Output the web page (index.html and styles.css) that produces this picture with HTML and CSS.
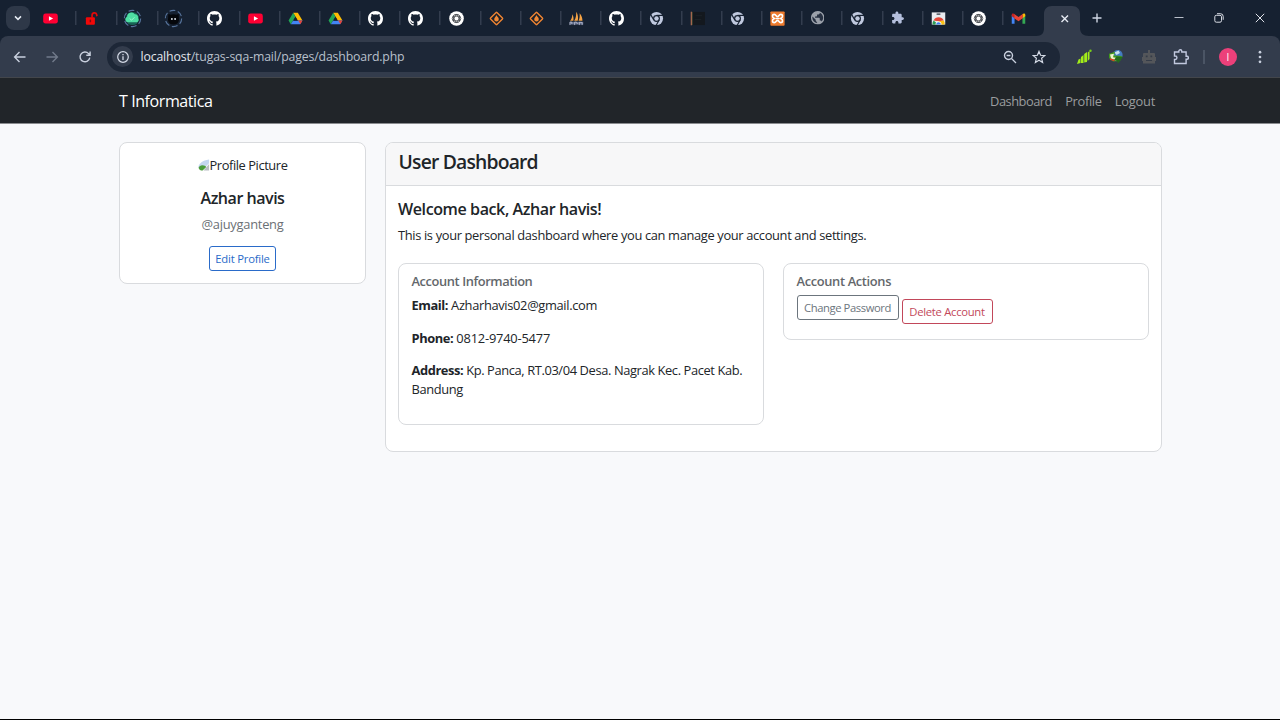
FILE: index.html
```
<!DOCTYPE html>
<html lang="en">
<head>
<meta charset="utf-8">
<title>User Dashboard</title>
<link rel="stylesheet" href="styles.css">
</head>
<body>
<svg class="sprite" aria-hidden="true">
  <symbol id="youtube" viewBox="0 0 16 16"><rect x=".2" y="2.6" width="15.6" height="10.8" rx="2.6" fill="#ff0033"/><path d="M6.3 5.5v5L10.8 8z" fill="#fff"/></symbol>
  <symbol id="unlock" viewBox="0 0 16 16"><rect x="2" y="6.600" width="9.600" height="8" rx="1" fill="#f20808"/><path d="M8.600 7.500V4.400a2.500 2.500 0 0 1 4.900-.6l.3 1.800" fill="none" stroke="#e00a0a" stroke-width="1.800"/><path d="M6.800 9.200v2.800" stroke="#7c0a12" stroke-width="1.500"/></symbol>
  <symbol id="cloud" viewBox="0 0 20 20"><circle cx="10" cy="10" r="8.6" fill="none" stroke="#56739b" stroke-width="1.2" stroke-dasharray="6.2 2.8"/><circle cx="10" cy="10" r="6.9" fill="#176354"/><path d="M5 14a3 3 0 0 1-.7-5.8A4.6 4.6 0 0 1 12.500 5.500a3.200 3.200 0 0 1 3.300 4.200A2.700 2.700 0 0 1 14.800 14z" fill="#4fdfa4"/><path d="M7 10l2 1.800 3-3" fill="none" stroke="#b6ffdf" stroke-width=".8"/></symbol>
  <symbol id="mask" viewBox="0 0 20 20"><circle cx="10" cy="10" r="8.600" fill="none" stroke="#56739b" stroke-width="1.200" stroke-dasharray="6.200 2.800"/><path d="M4.600 5.200l2.500.8a8 8 0 0 1 5.800 0l2.500-.8.4 6.300a5.900 5.900 0 0 1-11.600 0z" fill="#05070b"/><circle cx="8.300" cy="10.500" r="1" fill="#dfe6ef"/><circle cx="11.700" cy="10.500" r="1" fill="#dfe6ef"/></symbol>
  <symbol id="github" viewBox="0 0 16 16"><path fill="#fff" d="M8 0C3.580 0 0 3.580 0 8c0 3.540 2.290 6.530 5.470 7.590.4.070.55-.17.55-.38 0-.19-.01-.82-.01-1.490-2.010.37-2.530-.49-2.690-.94-.09-.23-.48-.94-.82-1.130-.28-.15-.68-.52-.01-.53.63-.01 1.080.58 1.230.82.72 1.210 1.870.87 2.330.66.07-.52.28-.87.51-1.070-1.780-.2-3.640-.89-3.640-3.950 0-.87.31-1.590.82-2.150-.08-.2-.36-1.020.08-2.120 0 0 .67-.21 2.200.82.64-.18 1.320-.27 2-.27s1.360.09 2 .27c1.530-1.040 2.200-.82 2.200-.82.44 1.100.16 1.920.08 2.120.51.56.82 1.270.82 2.150 0 3.070-1.870 3.750-3.650 3.950.29.25.54.73.54 1.480 0 1.070-.01 1.930-.01 2.200 0 .21.15.46.55.38A8.010 8.010 0 0 0 16 8c0-4.420-3.580-8-8-8z"/></symbol>
  <symbol id="drive" viewBox="0 0 16 16"><path d="M5.500 1.800h5l4.900 8.400h-5z" fill="#fbbc04"/><path d="M5.500 1.800L.6 10.200l2.300 4 5.100-8.200z" fill="#21a755"/><path d="M5.500 10.200h9.900l-2.400 4H2.900z" fill="#4285f4"/><path d="M11 10.200h4.400l-2.200 3.900z" fill="#ea4335"/><path d="M8 6.100l2.500 4.200h-5z" fill="#162131"/></symbol>
  <symbol id="gpt" viewBox="0 0 16 16"><circle cx="8" cy="8" r="7.800" fill="#fff"/><g fill="none" stroke="#2a2e33" stroke-width=".75"><rect id="link" x="3.400" y="5.500" width="9.200" height="5" rx="2.500"/><use href="#link" transform="rotate(60 8 8)"/><use href="#link" transform="rotate(120 8 8)"/></g></symbol>
  <symbol id="flame" viewBox="0 0 16 16"><rect x="3.200" y="3.200" width="9.600" height="9.600" rx=".6" transform="rotate(45 8 8)" fill="#1b2029" stroke="#ee8433" stroke-width="1.500"/><path d="M8 4.200c.3 1.700 2.400 2.300 2.400 4.400A2.400 2.400 0 0 1 8 11.200a2.400 2.400 0 0 1-2.400-2.600C5.600 6.700 7.600 6 8 4.200z" fill="#f28a36"/></symbol>
  <symbol id="pma" viewBox="0 0 16 16"><path d="M1.200 10.500C2.800 8.800 3.400 6.500 3.600 3.500 5 6 5 8.600 4.600 10.500zM5.500 10.500C7.300 8 7.800 4.500 7.700.8 9.800 4 10 8 9.300 10.500zM10.200 10.500c1.200-2.500 1.400-5 1.100-8 2.200 2.500 3.200 5.500 3 8z" fill="#f5a345"/><path d="M.8 11.500h14.400v3H.8z" fill="#5f6b88"/><path d="M1 15v-3.200h2v2M6 15v-3.200h2l1 2M11 15v-3l3 .2V15" fill="none" stroke="#b8bdd0" stroke-width=".9"/></symbol>
  <symbol id="chrome" viewBox="0 0 16 16"><circle cx="8" cy="8" r="7" fill="#c0c9df"/><circle cx="8" cy="8" r="3.700" fill="#162131"/><circle cx="8" cy="8" r="2.400" fill="#c0c9df"/><g stroke="#162131" stroke-width="1.300"><path id="vane" d="M8 4.700h7"/><use href="#vane" transform="rotate(120 8 8)"/><use href="#vane" transform="rotate(240 8 8)"/></g></symbol>
  <symbol id="strip" viewBox="0 0 16 16"><path d="M2 1h14v14H2z" fill="#13181e"/><path d="M.800 .800h1.200v14.400H.800z" fill="#c77554"/><path d="M2 1h.7v14H2z" fill="#4a5a3f"/><path d="M6 5h7M5 9h7" stroke="#1c2229"/></symbol>
  <symbol id="xampp" viewBox="0 0 16 16"><rect x=".4" y=".4" width="15.200" height="15.200" rx="1" fill="#ee7b2d"/><path d="M4.600 8C1.500 6.500 2.400 3.600 4.500 3.600S6.600 6 8 6s1.400-2.400 3.500-2.400S14.500 6.500 11.400 8c3.100 1.500 2.200 4.400.1 4.400S9.400 10 8 10s-1.400 2.400-3.500 2.400S1.500 9.500 4.600 8z" fill="none" stroke="#fff" stroke-width="1.700"/><path d="M6 8h4" stroke="#fff" stroke-width="1.500"/></symbol>
  <symbol id="globe" viewBox="2 2 20 20"><circle cx="12" cy="12" r="9.500" fill="#273142"/><path fill="#9ba1aa" d="M12 2C6.480 2 2 6.480 2 12s4.480 10 10 10 10-4.480 10-10S17.520 2 12 2zm-1 17.930c-3.950-.49-7-3.850-7-7.930 0-.62.08-1.210.21-1.790L9 15v1c0 1.100.9 2 2 2v1.930zm6.900-2.540c-.26-.81-1-1.390-1.900-1.390h-1v-3c0-.55-.45-1-1-1H8v-2h2c.55 0 1-.45 1-1V7h2c1.100 0 2-.9 2-2v-.41c2.930 1.190 5 4.060 5 7.410 0 2.080-.8 3.970-2.100 5.390z"/></symbol>
  <symbol id="puzzle" viewBox="0 0 24 24"><path fill="#b4bfdc" d="M20.500 11H19V7c0-1.100-.9-2-2-2h-4V3.500C13 2.120 11.880 1 10.500 1S8 2.120 8 3.500V5H4c-1.100 0-1.990.9-1.990 2v3.800H3.500c1.490 0 2.700 1.210 2.700 2.700s-1.210 2.700-2.700 2.700H2V20c0 1.100.9 2 2 2h3.800v-1.500c0-1.490 1.210-2.700 2.700-2.700 1.490 0 2.700 1.210 2.700 2.700V22H17c1.100 0 2-.9 2-2v-4h1.500c1.380 0 2.500-1.120 2.500-2.500S21.880 11 20.500 11z"/></symbol>
  <symbol id="store" viewBox="0 0 16 16"><path d="M.8 1.500h14.400v13H.8z" fill="#e9ebef"/><rect x="5.800" y="2.600" width="4.400" height="1.300" rx=".6" fill="#333a45"/><path d="M1.800 14.500a6.300 6.300 0 0 1 .9-4.500L8 14.500z" fill="#2e9c53"/><path d="M2.700 10a6.200 6.200 0 0 1 10.900 0L8 11z" fill="#e54638"/><path d="M13.600 10a6 6 0 0 1 .7 4.500H8V11z" fill="#fbc116"/><path d="M4.800 14.500a3.200 3.200 0 0 1 6.400 0z" fill="#fff"/><path d="M5.500 14.500a2.500 2.500 0 0 1 5 0z" fill="#3c7cea"/></symbol>
  <symbol id="gmail" viewBox="0 0 16 16"><path d="M.8 4v9.500h3V6.800z" fill="#4285f4"/><path d="M15.200 4v9.500h-3V6.800z" fill="#34a853"/><path d="M3.800 3.300v4.500L.8 5.500V4C.8 2.500 2.500 2 3.800 3.300z" fill="#c5221f"/><path d="M12.200 3.300v4.500l3-2.300V4c0-1.500-1.700-2-3-.7z" fill="#fbbc04"/><path d="M3.500 3.100L8 6.500l4.500-3.400v4.500L8 11 3.500 7.600z" fill="#ea4335"/></symbol>
</svg>

<header class="browser">
  <div class="tabstrip">
    <button class="tab-search"><svg width="10" height="10" viewBox="0 0 10 10"><path d="M2 3.400l3 3 3-3" fill="none" stroke="#e6ebf3" stroke-width="1.500"/></svg></button>
    <nav class="tabs">
      <span class="tab wide first"><svg><use href="#youtube"/></svg></span>
      <span class="tab wide"><svg><use href="#unlock"/></svg></span>
      <span class="tab wide ringed"><svg><use href="#cloud"/></svg></span>
      <span class="tab wide ringed"><svg><use href="#mask"/></svg></span>
      <span class="tab wide"><svg><use href="#github"/></svg></span>
      <span class="tab"><svg><use href="#youtube"/></svg></span>
      <span class="tab"><svg><use href="#drive"/></svg></span>
      <span class="tab"><svg><use href="#drive"/></svg></span>
      <span class="tab"><svg><use href="#github"/></svg></span>
      <span class="tab"><svg><use href="#github"/></svg></span>
      <span class="tab"><svg><use href="#gpt"/></svg></span>
      <span class="tab"><svg><use href="#flame"/></svg></span>
      <span class="tab"><svg><use href="#flame"/></svg></span>
      <span class="tab"><svg><use href="#pma"/></svg></span>
      <span class="tab"><svg><use href="#github"/></svg></span>
      <span class="tab"><svg><use href="#chrome"/></svg></span>
      <span class="tab"><svg><use href="#strip"/></svg></span>
      <span class="tab"><svg><use href="#chrome"/></svg></span>
      <span class="tab"><svg><use href="#xampp"/></svg></span>
      <span class="tab small"><svg><use href="#globe"/></svg></span>
      <span class="tab"><svg><use href="#chrome"/></svg></span>
      <span class="tab small"><svg><use href="#puzzle"/></svg></span>
      <span class="tab"><svg><use href="#store"/></svg></span>
      <span class="tab"><svg><use href="#gpt"/></svg></span>
      <span class="tab"><svg><use href="#gmail"/></svg></span>
    </nav>
    <svg class="active-tab" width="54" height="30" viewBox="0 0 54 30"><path d="M0 30c6 0 8-3 8-8V8c0-5 3-8 8-8h20c5 0 8 3 8 8v14c0 5 3 8 9 8z" fill="#333c4c"/><path d="M25.500 9.500l6.500 6.500m0-6.500l-6.500 6.500" stroke="#e8ecf4" stroke-width="1.400"/></svg>
    <svg class="new-tab" width="12" height="12" viewBox="0 0 12 12"><path d="M6 1.500v9M1.500 6h9" stroke="#cfd6e3" stroke-width="1.400"/></svg>
    <div class="window-controls">
      <svg width="10" height="10" viewBox="0 0 10 10"><path d="M.5 4.500h9" stroke="#b9bfca"/></svg>
      <svg width="10" height="10" viewBox="0 0 10 10"><rect x=".8" y="2.300" width="6.700" height="6.900" rx="1.500" fill="none" stroke="#d9dde5"/><path d="M3 .7h3.400a2.800 2.800 0 0 1 2.800 2.800v3.300" fill="none" stroke="#d9dde5"/></svg>
      <svg width="10" height="10" viewBox="0 0 10 10"><path d="M.8.8l8.400 8.400m0-8.400L.8 9.200" stroke="#e0e3ea"/></svg>
    </div>
  </div>
  <div class="toolbar">
    <div class="history">
      <svg width="14" height="14" viewBox="0 0 14 14"><path d="M12.500 7h-11M6.500 2L1.600 7l4.900 5" fill="none" stroke="#c9d0de" stroke-width="1.400"/></svg>
      <svg width="14" height="14" viewBox="0 0 14 14"><path d="M1.500 7h11M7.500 2l4.900 5-4.900 5" fill="none" stroke="#717a8a" stroke-width="1.400"/></svg>
      <svg width="14" height="14" viewBox="0 0 14 14"><path d="M11.800 7.700A4.900 4.900 0 1 1 10.600 3.600L12 5M12.100 1.500V5.300H8.300" fill="none" stroke="#c9d0de" stroke-width="1.400"/></svg>
    </div>
    <div class="omnibox">
      <span class="site-info"><svg width="14" height="14" viewBox="0 0 14 14"><circle cx="7" cy="7" r="5.300" fill="none" stroke="#d5dbe7" stroke-width="1.200"/><path d="M7 6.300V10M7 3.900v1.300" stroke="#d5dbe7" stroke-width="1.300"/></svg></span>
      <span class="url"><b>localhost</b>/tugas-sqa-mail/pages/dashboard.php</span>
      <svg class="zoom" width="14" height="14" viewBox="0 0 14 14"><circle cx="5.500" cy="5.500" r="4" fill="none" stroke="#c9d0de" stroke-width="1.400"/><path d="M8.500 8.500l4.500 4.500M3.600 5.500h3.800" stroke="#c9d0de" stroke-width="1.300"/></svg>
      <svg width="14" height="14" viewBox="0 0 14 14"><path d="M7 1.400l1.600 3.900 4.200.3-3.200 2.700 1 4.100L7 10.200l-3.600 2.200 1-4.100L1.200 5.600l4.200-.3z" fill="none" stroke="#d5dbe7" stroke-width="1.200"/></svg>
    </div>
    <div class="extensions">
      <svg width="16" height="16" viewBox="0 0 16 16"><path d="M1 15l1.500-4.500 2-1V14zM5 14V8l2.500-2V14zM8.200 13.500V5L11 3v10zM11.700 12V3.500L13.500 2v8z" fill="#a2ec19"/><circle cx="14.500" cy="1.700" r="1.200" fill="#78cf18"/></svg>
      <svg width="16" height="16" viewBox="0 0 16 16"><circle cx="9.700" cy="6" r="4.900" fill="#447cc1"/><path d="M6.500 3.500l4-2 1.500 2.500-3.500 2z" fill="#c5dff2"/><path d="M1 4.800l6-2-1 3.700 8 .5L12 12l-7 .5L1 9z" fill="#42991c"/><path d="M2 5.500l4-.8-1 3.500L9 9 8 11.500l-5-2z" fill="#eef5ce"/><path d="M8.500 7.500L15 8l-5 6.500-1-2.800-3-.8z" fill="#246b1e"/><path d="M2 10l4.500 1.500" stroke="#db3f25" stroke-width="1.500"/></svg>
      <svg width="16" height="16" viewBox="0 0 16 16"><path d="M7 1h2v3H7zM3 4h10a1 1 0 0 1 1 1v3h1v4h-1v2.500H2V12H1V8h1V5a1 1 0 0 1 1-1z" fill="#54565a"/><path d="M4.800 6.500h1.800v1.800H4.800zM9.400 6.500h1.800v1.800H9.400zM5 11h6v1H5z" fill="#353c48"/></svg>
      <svg width="16" height="16" viewBox="0 0 16 16"><path d="M1.500 3h4.300V2.200a1.500 1.500 0 0 1 3 0V3h4.300v4.300h.8a1.500 1.500 0 0 1 0 3h-.8v4.200H1.500v-4h.7a1.700 1.700 0 0 0 0-3.500h-.7z" fill="none" stroke="#c2c9df" stroke-width="1.400"/></svg>
    </div>
    <span class="divider"></span>
    <span class="avatar">I</span>
    <svg class="more" width="4" height="14" viewBox="0 0 4 14"><g fill="#c9d0de"><circle cx="2" cy="2.200" r="1.350"/><circle cx="2" cy="7" r="1.350"/><circle cx="2" cy="11.800" r="1.350"/></g></svg>
  </div>
</header>

<div class="navbar">
  <span class="brand">T Informatica</span>
  <nav class="nav-links"><a class="nav-dashboard">Dashboard</a><a class="nav-profile">Profile</a><a class="nav-logout">Logout</a></nav>
</div>

<main class="container">
  <aside class="card profile">
    <div class="picture">
      <svg width="12" height="13" viewBox="0 0 13 13"><path d="M0 9C1 4 5 1 12 0v4l-3 3z" fill="#c3d6f0"/><path d="M0 10c1-3 4-5 8-3l1 1-4 4H1z" fill="#4b9d3d"/><path d="M12 5v7H6z" fill="#b9bec4"/></svg><span>Profile Picture</span>
    </div>
    <h5 class="name">Azhar havis</h5>
    <p class="handle">@ajuyganteng</p>
    <a class="btn primary">Edit Profile</a>
  </aside>
  <section class="card dashboard">
    <div class="card-header"><h4>User Dashboard</h4></div>
    <div class="card-body">
      <h5 class="welcome">Welcome back, Azhar havis!</h5>
      <p class="intro">This is your personal dashboard where you can manage your account and settings.</p>
      <div class="row">
        <div class="card info">
          <h6 class="info-title">Account Information</h6>
          <p class="email"><strong>Email:</strong> Azharhavis02@gmail.com</p>
          <p class="phone"><strong>Phone:</strong> 0812-9740-5477</p>
          <p class="address"><strong>Address:</strong> Kp. Panca, RT.03/04 Desa. Nagrak Kec. Pacet Kab. Bandung</p>
        </div>
        <div class="card actions">
          <h6 class="actions-title">Account Actions</h6>
          <div class="buttons"><a class="btn secondary">Change Password</a><a class="btn danger">Delete Account</a></div>
        </div>
      </div>
    </div>
  </section>
</main>
<footer class="bottom-edge"></footer>
</body>
</html>
```

FILE: styles.css
```
* { box-sizing: border-box; }
body {
  margin: 0;
  height: 720px;
  overflow: hidden;
  display: flex;
  flex-direction: column;
  background: #f8f9fb;
  color: #212529;
  font: 12.87px/19.3px "Open Sans", "Noto Sans", sans-serif;
}
h4, h5, h6, p { margin: 0; }
svg { display: block; flex: none; }
.sprite { position: absolute; width: 0; height: 0; }

.browser { background: #162131; flex: none; }
.tabstrip { height: 36px; display: flex; align-items: center; padding-left: 6px; }
.tab-search { width: 24px; height: 24px; padding: 0; border: 0; border-radius: 8px; background: #2e3848; display: flex; align-items: center; justify-content: center; }
.tabs { display: flex; }
.tab { width: 40.2px; height: 36px; display: flex; align-items: center; justify-content: center; background: linear-gradient(#333d4e, #333d4e) 3.5px 11px / 1.5px 14px no-repeat; }
.tab.wide { width: 41px; }
.tab.first { background: none; }
.tab svg { width: 15px; height: 15px; }
.tab.ringed svg { width: 19px; height: 19px; }
.tab.small svg { width: 13.5px; height: 13.5px; }
.active-tab { align-self: flex-end; margin-left: -3px; }
.new-tab { margin-left: 1px; }
.window-controls { display: flex; gap: 30.5px; margin-left: auto; padding-right: 15.5px; }

.toolbar { height: 42px; background: #333c4c; border-radius: 8px 8px 0 0; border-bottom: 1px solid #43464b; display: flex; align-items: center; }
.history { display: flex; gap: 18.3px; padding-left: 13px; width: 107px; }
.omnibox { width: 953px; height: 30px; border-radius: 15px; background: #1d2737; display: flex; align-items: center; padding: 0 14px 0 5px; }
.site-info { width: 21px; height: 21px; border-radius: 50%; background: #333c4c; display: flex; align-items: center; justify-content: center; }
.url { margin-left: 7.5px; color: #b9c0cc; font-size: 12.3px; letter-spacing: -.15px; }
.url b { font-weight: 400; color: #e4e8ef; }
.zoom { margin-left: auto; margin-right: 15px; }
.extensions { display: flex; gap: 16.3px; margin-left: 16px; }
.divider { width: 1.5px; height: 14px; margin-left: 14.5px; background: #4b5565; }
.avatar { width: 18px; height: 18px; margin-left: 14px; border-radius: 50%; background: #ec407a; color: #fff; font-size: 10px; line-height: 18px; text-align: center; }
.more { margin-left: 21px; }

.navbar { flex: none; height: 46px; background: #212529; border-bottom: 1px solid #8a8c8f; display: flex; align-items: center; justify-content: space-between; padding: 2px 125px 0 119px; }
.brand { color: #fff; font-size: 16.09px; letter-spacing: -.45px; }
.nav-links { display: flex; gap: 13.3px; color: #9b9d9f; letter-spacing: -.35px; }
.nav-dashboard { letter-spacing: -.5px; }
.nav-logout { letter-spacing: -.25px; }

.container { display: grid; grid-template-columns: 247px 777px; gap: 19px; align-items: start; padding: 18px 0 0 119px; flex: 1; }
.card { background: #fff; border: 1px solid #d9dbde; border-radius: 8px; }
.profile { height: 142px; padding: 13px 13px 0; display: flex; flex-direction: column; align-items: center; }
.picture { height: 18px; display: flex; align-items: center; white-space: nowrap; letter-spacing: -.42px; }
.picture svg { border-radius: 7px 0 0 7px; }
.picture span { padding-top: 2px; }
.name { margin-top: 15px; font-size: 16.09px; line-height: 19px; font-weight: 600; letter-spacing: -.5px; }
.handle { margin-top: 7px; color: #6b7075; letter-spacing: -.25px; }
.btn { display: block; height: 25px; border: 1px solid; border-radius: 3px; font-size: 11.26px; line-height: 23px; text-align: center; white-space: nowrap; }
.primary { width: 67px; margin-top: 12px; color: #2a6bc9; letter-spacing: -.2px; }
.card-header { height: 43px; padding: 8px 12.5px; border-bottom: 1px solid #d9dbde; border-radius: 7px 7px 0 0; background: #f7f7f8; }
.card-header h4 { font-size: 19.31px; line-height: 22px; font-weight: 600; letter-spacing: -.8px; }
.card-body { padding: 14px 13px 26px 12px; }
.welcome { font-size: 16.09px; line-height: 19px; font-weight: 600; letter-spacing: -.43px; }
.intro { margin-top: 7px; letter-spacing: -.345px; }
.row { display: grid; grid-template-columns: 366px 366px; gap: 19px; align-items: start; margin-top: 18px; }
.info, .actions { padding: 9px 12.5px 0; }
.info { height: 162px; }
.actions { height: 77px; }
.info-title, .actions-title { font-size: 12.87px; line-height: 16px; font-weight: 600; color: #63676b; letter-spacing: -.4px; }
.actions-title { letter-spacing: -.34px; }
.email { margin-top: 7px; letter-spacing: -.33px; }
.phone, .address { margin-top: 13px; }
.phone { letter-spacing: -.2px; }
.address { letter-spacing: -.38px; }
.info strong { letter-spacing: -.42px; }
.buttons { display: flex; gap: 3px; margin-top: 5.5px; }
.secondary { width: 102px; color: #6c757d; letter-spacing: -.42px; }
.danger { width: 91px; margin-top: 4px; color: #c2485a; letter-spacing: -.28px; }
.bottom-edge { height: 1px; background: #000; }
```
